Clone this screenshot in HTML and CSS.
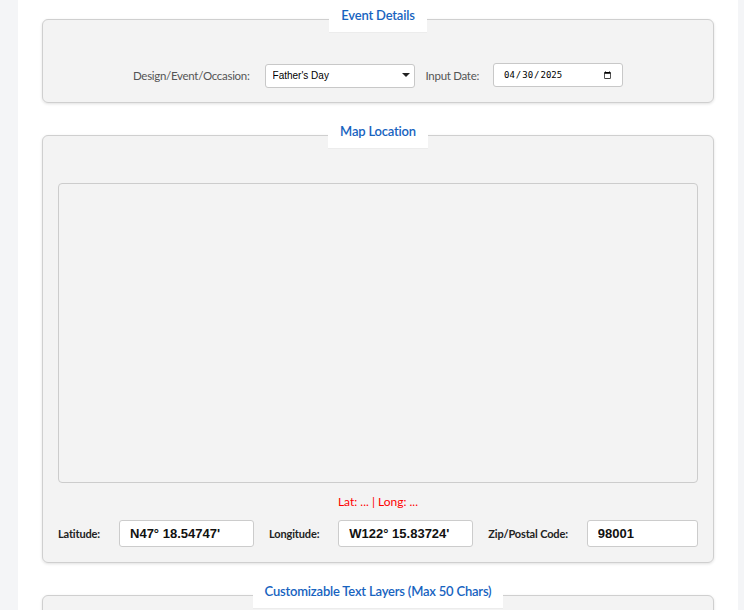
FILE: index.html
```html
<!DOCTYPE html>
<html lang="en">
<head>
<meta charset="utf-8">
<title>Event Details</title>
<link rel="stylesheet" href="styles.css">
</head>
<body>
<main class="page">
  <fieldset class="panel">
    <legend class="panel-title">Event Details</legend>
    <div class="event-row">
      <label class="soft-label" for="occasion">Design/Event/Occasion:</label>
      <div class="select-wrap">
        <select id="occasion" class="select">
          <option>Father's Day</option>
          <option>Mother's Day</option>
          <option>Birthday</option>
        </select>
        <span class="select-arrow"></span>
      </div>
      <label class="soft-label date-label" for="date">Input Date:</label>
      <input id="date" class="date" type="date" value="2025-04-30">
    </div>
  </fieldset>

  <fieldset class="panel">
    <legend class="panel-title">Map Location</legend>
    <div class="map"></div>
    <p class="coords">Lat: ... | Long: ...</p>
    <div class="loc-row">
      <label class="strong-label lat-label" for="lat">Latitude:</label>
      <input id="lat" class="field field-lat" type="text" value="N47° 18.54747'">
      <label class="strong-label long-label" for="lng">Longitude:</label>
      <input id="lng" class="field field-lng" type="text" value="W122° 15.83724'">
      <label class="strong-label zip-label" for="zip">Zip/Postal Code:</label>
      <input id="zip" class="field field-zip" type="text" value="98001">
    </div>
  </fieldset>

  <fieldset class="panel">
    <legend class="panel-title">Customizable Text Layers (Max 50 Chars)</legend>
    <div class="layers"></div>
  </fieldset>
</main>
</body>
</html>
```

FILE: styles.css
```css
html, body {
  margin: 0;
  padding: 0;
}
body {
  background: #f4f5f7;
  font-family: Lato, "Open Sans", sans-serif;
}
.page {
  width: 672px;
  height: 604px;
  margin-left: 18px;
  padding: 6px 24px 0;
  background: #ffffff;
  overflow: hidden;
}
.panel {
  margin: 0 0 19px;
  padding: 0 15px 15px;
  border: 1px solid #cfcfcf;
  border-radius: 6px;
  background: #f3f3f3;
  box-shadow: 0 1px 3px rgba(0, 0, 0, 0.12);
  min-width: 0;
}
.panel-title {
  margin: 0 auto;
  padding: 0 12px 8px;
  background: #ffffff;
  border-bottom: 1px solid #ececec;
  color: #1763c0;
  font-size: 13px;
  font-weight: 600;
  letter-spacing: -0.2px;
  line-height: 18px;
}
.event-row {
  display: flex;
  justify-content: center;
  align-items: center;
  margin-top: 30px;
}
.soft-label {
  color: #555555;
  font-size: 11.5px;
  letter-spacing: -0.3px;
  margin-right: 15px;
}
.date-label {
  margin-left: 11px;
  margin-right: 14px;
}
.select-wrap {
  position: relative;
  width: 150px;
  height: 24px;
}
.select {
  appearance: none;
  -webkit-appearance: none;
  width: 150px;
  height: 24px;
  margin: 0;
  padding: 0 20px 0 7px;
  border: 1px solid #c8c8c8;
  border-radius: 3px;
  background: #ffffff;
  font-family: "Liberation Sans", Arial, sans-serif;
  font-size: 10px;
  color: #000;
}
.select-arrow {
  position: absolute;
  right: 5px;
  top: 10px;
  width: 0;
  height: 0;
  border-left: 4px solid transparent;
  border-right: 4px solid transparent;
  border-top: 4px solid #222;
  pointer-events: none;
}
.date {
  width: 130px;
  height: 24px;
  margin: 0;
  padding: 0 8px 0 9px;
  box-sizing: border-box;
  border: 1px solid #c8c8c8;
  border-radius: 3px;
  background: #ffffff;
  font-family: "DejaVu Sans Mono", monospace;
  font-size: 9px;
  color: #000;
}
.map {
  margin-top: 34px;
  height: 298px;
  border: 1px solid #cccccc;
  border-radius: 4px;
  background: #f3f3f3;
}
.coords {
  margin: 11px 0 0;
  text-align: center;
  color: #ff0000;
  font-size: 12px;
  line-height: 16px;
}
.loc-row {
  display: flex;
  align-items: center;
  margin-top: 10px;
}
.strong-label {
  color: #222222;
  font-size: 11px;
  font-weight: 700;
  letter-spacing: -0.15px;
  margin-right: 19px;
  white-space: nowrap;
}
.field {
  height: 27px;
  box-sizing: border-box;
  margin: 0 15px 0 0;
  padding: 0 10px;
  border: 1px solid #cccccc;
  border-radius: 3px;
  background: #ffffff;
  font-family: "Liberation Sans", Arial, sans-serif;
  font-size: 13px;
  font-weight: bold;
  color: #111;
}
.field-lat, .field-lng {
  width: 135px;
}
.field-zip {
  flex: 1;
  min-width: 0;
  margin-right: 0;
}
.layers {
  height: 60px;
}
```
